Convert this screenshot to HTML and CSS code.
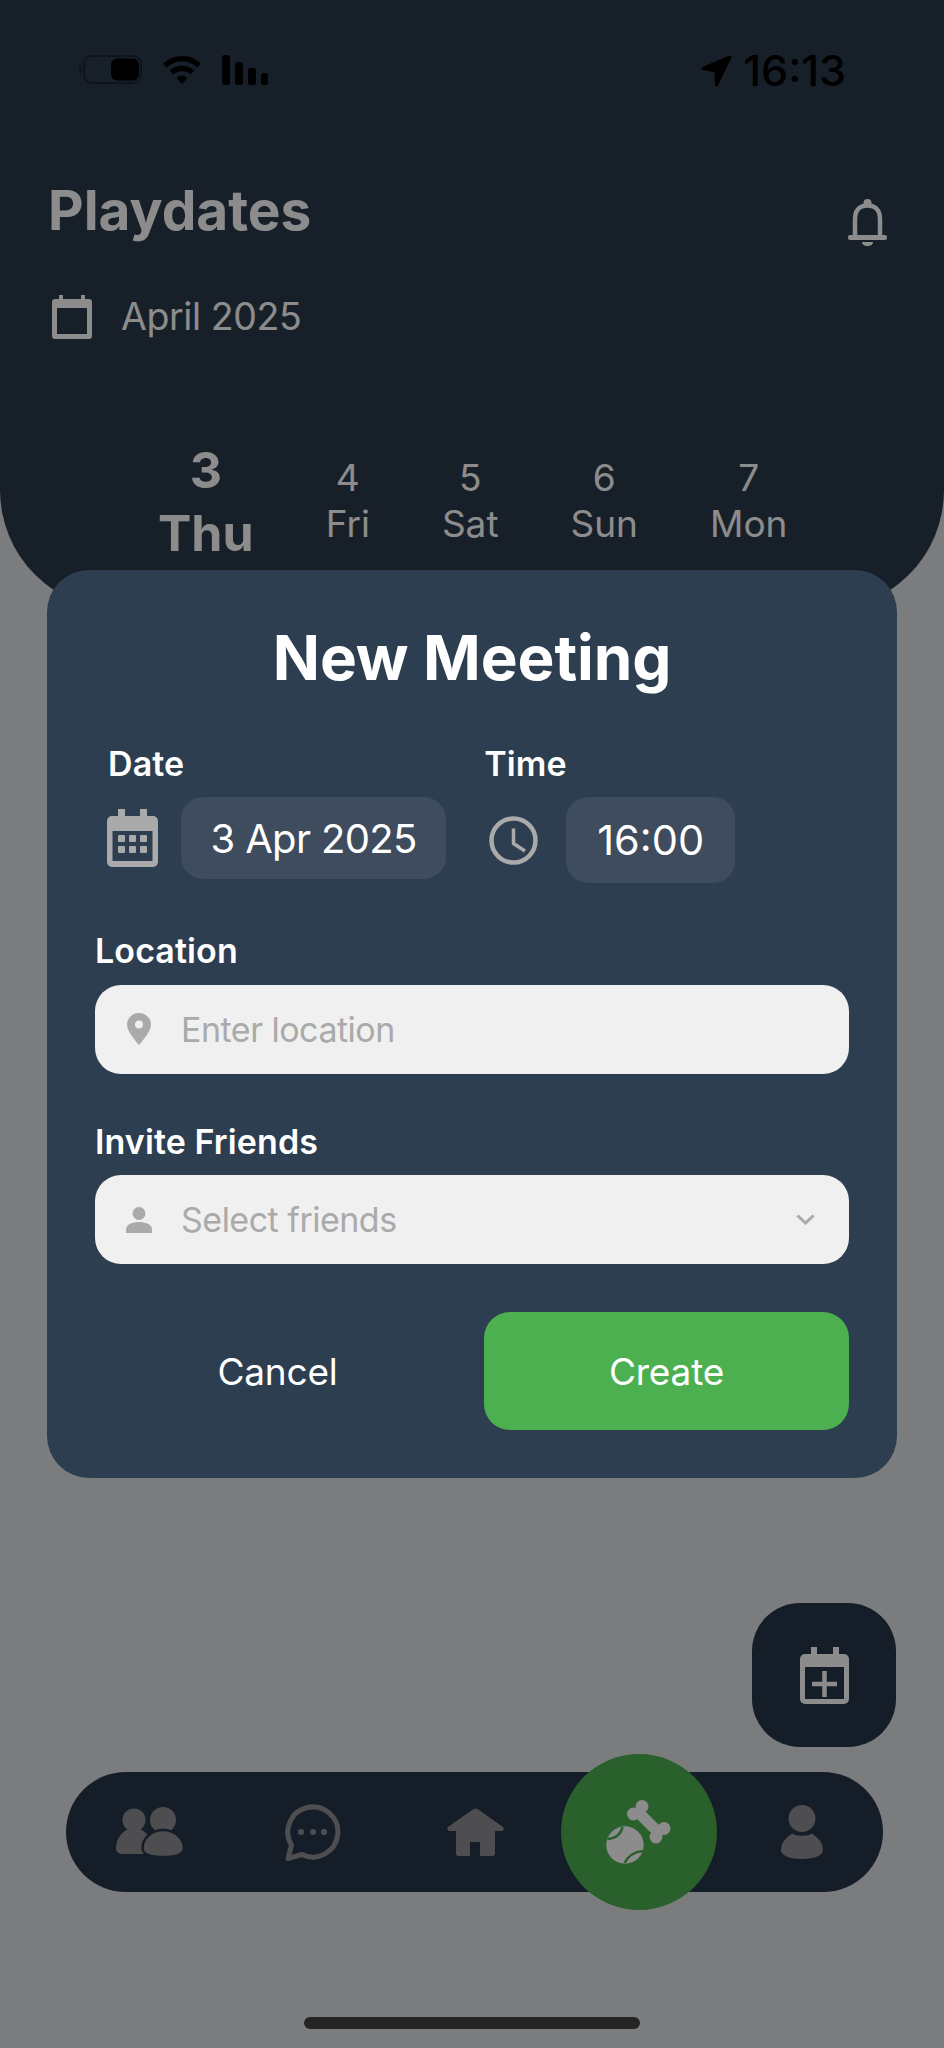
FILE: index.html
```html
<!DOCTYPE html>
<html>
<head>
    <meta charset="utf-8">
    <title>Playdates</title>
    <link rel="stylesheet" href="styles.css">
</head>
<body>
<div class="screen">

    <header class="top">
        <div class="status">
            <div class="status-left">
                <svg class="battery" width="63" height="29" viewBox="0 0 63 29">
                    <rect x="0" y="11" width="2.5" height="7" rx="1" fill="#000" opacity=".35"/>
                    <rect x="5" y="1" width="57" height="27" rx="8" fill="none" stroke="#000" stroke-opacity=".35" stroke-width="2"/>
                    <rect x="32" y="3.5" width="28" height="22" rx="6" fill="#000"/>
                </svg>
                <svg width="40" height="29" viewBox="0 0 40 29">
                    <path d="M3 10.5A25 25 0 0 1 37 10.5M9.5 17.5A16 16 0 0 1 30.5 17.5" fill="none" stroke="#000" stroke-width="5.5"/>
                    <path d="M14.5 23A8 8 0 0 1 25.500 23L20 29Z" fill="#000"/>
                </svg>
                <svg width="46" height="30" viewBox="0 0 46 30" fill="#000">
                    <rect x="0" y="0" width="8" height="30" rx="2.500"/>
                    <rect x="13" y="7" width="8" height="23" rx="2.500"/>
                    <rect x="26" y="13" width="8" height="17" rx="2.500"/>
                    <rect x="39" y="18" width="7" height="12" rx="2.500"/>
                </svg>
            </div>
            <div class="status-right">
                <svg width="31" height="32" viewBox="0 0 31 32">
                    <path d="M29 2L2 13.500L15 16L15.500 30Z" fill="#000" stroke="#000" stroke-width="3" stroke-linejoin="round"/>
                </svg>
                <span class="clock-text">16:13</span>
            </div>
        </div>

        <div class="title-row">
            <h1 class="page-title">Playdates</h1>
            <svg class="bell" width="39" height="47" viewBox="0 0 39 47">
                <circle cx="19.500" cy="4" r="4" fill="#fff"/>
                <path d="M7 37V20C7 11 12 6.500 19.500 6.500S32 11 32 20V37" fill="none" stroke="#fff" stroke-width="4.500"/>
                <rect x="0" y="36" width="39" height="5" rx="2" fill="#fff"/>
                <path d="M14 43H25C25 45.500 22.500 47 19.500 47S14 45.500 14 43Z" fill="#fff"/>
            </svg>
        </div>

        <div class="month-row">
            <svg width="40" height="44" viewBox="0 0 40 44">
                <path fill-rule="evenodd" d="M3 4H7V0H11V4H29V0H33V4H37A3 3 0 0 1 40 7V41A3 3 0 0 1 37 44H3A3 3 0 0 1 0 41V7A3 3 0 0 1 3 4ZM5 13V39H35V13Z" fill="#fff"/>
            </svg>
            <span class="month">April 2025</span>
        </div>

        <div class="days">
            <div class="day day-active"><span>3</span><span>Thu</span></div>
            <div class="day"><span>4</span><span>Fri</span></div>
            <div class="day"><span>5</span><span>Sat</span></div>
            <div class="day"><span>6</span><span>Sun</span></div>
            <div class="day"><span>7</span><span>Mon</span></div>
        </div>
    </header>

    <button class="fab">
        <svg width="49" height="57" viewBox="0 0 49 57">
            <path fill-rule="evenodd" d="M5 7H11V0H17V7H33V0H39V7H44A5 5 0 0 1 49 12V52A5 5 0 0 1 44 57H5A5 5 0 0 1 0 52V12A5 5 0 0 1 5 7ZM5 20V52H44V20Z" fill="#fff"/>
            <path d="M12 37H37M24.500 24V50" stroke="#fff" stroke-width="4.500" fill="none"/>
        </svg>
    </button>

    <nav class="tabbar">
        <div class="tab">
            <svg width="68" height="50" viewBox="0 0 68 50" fill="#8e8e93">
                <circle cx="18" cy="13" r="11.500"/>
                <path d="M0 41C0 31 8 21 18 21S36 30 36 42V47H7C3 47 0 45 0 41Z"/>
                <circle cx="47" cy="13" r="13"/>
                <path d="M26.500 41C26.500 31 36 23 47 23S68 31 68 41C68 47 60 50 47 50S26.500 47 26.500 41Z" stroke="#263649" stroke-width="2.500"/>
            </svg>
        </div>
        <div class="tab">
            <svg width="56" height="57" viewBox="0 0 56 57">
                <path d="M3 54.500L6.500 41A25 25 0 1 1 17 50.500Z" fill="none" stroke="#8e8e93" stroke-width="5" stroke-linejoin="round"/>
                <circle cx="16" cy="28" r="3" fill="#8e8e93"/>
                <circle cx="28" cy="28" r="3" fill="#8e8e93"/>
                <circle cx="39" cy="28" r="3" fill="#8e8e93"/>
            </svg>
        </div>
        <div class="tab">
            <svg width="57" height="48" viewBox="0 0 57 48">
                <path d="M26.500 1L1 19C-.5 20.500 .5 23 2.500 23H9V45.500C9 47 10 48 11.500 48H23V34H33V48H45.500C47 48 48 47 48 45.500V23H54.500C56.500 23 57.500 20.500 56 19L30.500 1C29.500 .3 27.500 .3 26.500 1Z" fill="#8e8e93"/>
            </svg>
        </div>
        <div class="tab">
            <div class="tab-main">
                <svg width="65" height="64" viewBox="0 0 65 64">
                    <circle cx="19" cy="45" r="18.700" fill="#fff"/>
                    <path d="M1.500 39Q14 38 16.500 27M18.500 63Q24 52 37 51" fill="none" stroke="#4caf50" stroke-width="2.500"/>
                    <path d="M31 11L53 33" stroke="#fff" stroke-width="11"/>
                    <g fill="#fff">
                        <circle cx="27.500" cy="14" r="6.500"/>
                        <circle cx="36" cy="6.500" r="6.500"/>
                        <circle cx="50" cy="37" r="6.500"/>
                        <circle cx="58" cy="28.500" r="6.500"/>
                    </g>
                </svg>
            </div>
        </div>
        <div class="tab">
            <svg width="42" height="54" viewBox="0 0 42 54" fill="#8e8e93">
                <circle cx="21" cy="13.500" r="13.500"/>
                <path d="M0 45C0 37 6 32 11 28.500C15 31.500 27 31.500 31 28.500C36 32 42 37 42 45C42 51 32 54 21 54S0 51 0 45Z"/>
            </svg>
        </div>
    </nav>

    <div class="home-bar"></div>

    <div class="overlay"></div>

    <section class="modal">
        <h2 class="modal-title">New Meeting</h2>

        <div class="when">
            <div class="when-field">
                <div class="label when-label">Date</div>
                <div class="when-row">
                    <svg class="when-icon" width="51" height="58" viewBox="0 0 51 58">
                        <path fill-rule="evenodd" d="M5 7H11V0H18V7H33V0H40V7H46A5 5 0 0 1 51 12V53A5 5 0 0 1 46 58H5A5 5 0 0 1 0 53V12A5 5 0 0 1 5 7ZM5.500 22V52H45.500V22Z" fill="#aaa"/>
                        <g fill="#aaa">
                            <rect x="11" y="26" width="7" height="7" rx="1"/>
                            <rect x="22" y="26" width="7" height="7" rx="1"/>
                            <rect x="33" y="26" width="7" height="7" rx="1"/>
                            <rect x="11" y="37" width="7" height="7" rx="1"/>
                            <rect x="22" y="37" width="7" height="7" rx="1"/>
                            <rect x="33" y="37" width="7" height="7" rx="1"/>
                        </g>
                    </svg>
                    <div class="pill pill-date">3 Apr 2025</div>
                </div>
            </div>
            <div class="when-field">
                <div class="label">Time</div>
                <div class="when-row when-row-time">
                    <svg class="when-icon" width="49" height="49" viewBox="0 0 49 49">
                        <circle cx="24.500" cy="24.500" r="22" fill="none" stroke="#aaa" stroke-width="4.500"/>
                        <path d="M24.500 12.500V27.500L36 35" fill="none" stroke="#aaa" stroke-width="3.500"/>
                    </svg>
                    <div class="pill pill-time">16:00</div>
                </div>
            </div>
        </div>

        <div class="label label-block">Location</div>
        <div class="input">
            <span class="input-icon">
                <svg width="24" height="32" viewBox="0 0 24 32">
                    <path fill-rule="evenodd" d="M12 0C18.500 0 24 5 24 11.500C24 18 17 26 12 32C7 26 0 18 0 11.500C0 5 5.500 0 12 0ZM12 7.500A4 4 0 1 0 12 15.500A4 4 0 1 0 12 7.500Z" fill="#aaa"/>
                </svg>
            </span>
            <span class="placeholder">Enter location</span>
        </div>

        <div class="label label-block">Invite Friends</div>
        <div class="input">
            <span class="input-icon">
                <svg width="26" height="26" viewBox="0 0 26 26" fill="#aaa">
                    <circle cx="13" cy="6.500" r="6.500"/>
                    <path d="M0 26V22.500C0 17 7 15 13 15S26 17 26 22.500V26Z"/>
                </svg>
            </span>
            <span class="placeholder">Select friends</span>
            <svg class="chevron" width="19" height="11" viewBox="0 0 19 11">
                <path d="M1.500 1.500L9.500 9L17.500 1.500" fill="none" stroke="#aaa" stroke-width="3"/>
            </svg>
        </div>

        <div class="actions">
            <button class="btn">Cancel</button>
            <button class="btn btn-create">Create</button>
        </div>
    </section>

</div>
</body>
</html>
```

FILE: styles.css
```css
html, body {
    margin: 0;
    padding: 0;
}
body {
    font-family: Inter, "Liberation Sans", sans-serif;
    color: #fff;
}
svg {
    display: block;
    flex: none;
}

.screen {
    position: relative;
    width: 944px;
    height: 2048px;
    overflow: hidden;
    background: #e0e2e5;
}

/* header */
.top {
    height: 610px;
    box-sizing: border-box;
    padding-top: 55px;
    background: #2b3a4c;
    border-radius: 0 0 120px 120px;
}
.status {
    display: flex;
    justify-content: space-between;
    align-items: flex-start;
    height: 32px;
    padding: 0 98px 0 79px;
}
.status-left {
    display: flex;
    align-items: flex-start;
    gap: 20px;
}
.status-right {
    display: flex;
    align-items: center;
    gap: 11px;
}
.clock-text {
    color: #000;
    font-size: 43px;
    font-weight: 500;
    line-height: 32px;
    margin-top: -2px;
}

.title-row {
    display: flex;
    justify-content: space-between;
    align-items: flex-start;
    margin-top: 92px;
    padding: 0 57px 0 48px;
}
.page-title {
    margin: 0;
    font-size: 55px;
    font-weight: 700;
    line-height: 62px;
}
.bell {
    margin-top: 20px;
}

.month-row {
    display: flex;
    align-items: center;
    gap: 29px;
    margin-top: 49px;
    padding-left: 52px;
}
.month {
    font-size: 37.5px;
    letter-spacing: -0.4px;
    line-height: 44px;
}

.days {
    display: flex;
    align-items: center;
    gap: 72px;
    margin-top: 100px;
    padding-left: 158px;
}
.day {
    display: flex;
    flex-direction: column;
    align-items: center;
    margin-bottom: 2px;
    font-size: 37px;
    line-height: 46px;
}
.day-active {
    margin-bottom: 0;
    font-size: 50px;
    font-weight: 700;
    line-height: 63px;
}

/* floating stuff at the bottom */
.fab {
    display: flex;
    align-items: center;
    justify-content: center;
    width: 144px;
    height: 144px;
    margin: 993px 48px 0 auto;
    padding: 0;
    border: 0;
    border-radius: 48px;
    background: #263649;
}

.tabbar {
    display: flex;
    align-items: center;
    box-sizing: border-box;
    width: 817px;
    height: 120px;
    margin: 25px 0 0 66px;
    padding-left: 2px;
    border-radius: 60px;
    background: #263649;
}
.tab {
    flex: 1;
    display: flex;
    justify-content: center;
    align-items: center;
}
.tab-main {
    display: flex;
    align-items: center;
    justify-content: center;
    flex: none;
    width: 156px;
    height: 156px;
    border-radius: 50%;
    background: #4caf50;
}

.home-bar {
    width: 336px;
    height: 12px;
    margin: 125px auto 0;
    border-radius: 6px;
    background: #434343;
}

.overlay {
    position: absolute;
    inset: 0;
    background: rgba(0, 0, 0, 0.45);
}

/* modal */
.modal {
    position: absolute;
    top: 570px;
    left: 47px;
    width: 850px;
    box-sizing: border-box;
    padding: 51px 48px 48px;
    border-radius: 42px;
    background: #2c3e50;
}
.modal-title {
    margin: 0;
    text-align: center;
    font-size: 62px;
    font-weight: 700;
    letter-spacing: -0.1px;
    line-height: 74px;
}

.label {
    font-size: 34px;
    font-weight: 600;
    letter-spacing: 0.1px;
    line-height: 38px;
}
.label-block {
    margin: 49px 0 14.5px;
}
.when-label {
    padding-left: 1px;
}

.when {
    display: flex;
    gap: 38px;
    margin-top: 50px;
    padding-left: 12px;
}
.when-row {
    display: flex;
    align-items: center;
    gap: 23px;
    margin-top: 14px;
}
.when-row-time {
    gap: 28px;
    padding-left: 5px;
}
.pill {
    display: flex;
    align-items: center;
    border-radius: 22px;
    background: #3e4c5e;
}
.pill-date {
    height: 82px;
    padding: 0 29.5px;
    font-size: 40px;
    letter-spacing: -0.65px;
}
.pill-time {
    height: 86px;
    padding: 0 31px;
    font-size: 41.5px;
}

.input {
    display: flex;
    align-items: center;
    height: 89px;
    border-radius: 26px;
    background: #f0f0f0;
}
.input-icon {
    display: flex;
    justify-content: center;
    width: 40px;
    margin: 0 22px 0 24px;
}
.placeholder {
    flex: 1;
    color: #aaa;
    font-size: 34px;
    letter-spacing: -0.5px;
}
.chevron {
    margin-right: 34px;
}

.actions {
    display: flex;
    gap: 24px;
    margin-top: 48px;
}
.btn {
    flex: 1;
    height: 118px;
    padding: 0;
    border: 0;
    border-radius: 26px;
    background: none;
    color: #fff;
    font-family: inherit;
    font-size: 37px;
    letter-spacing: -0.2px;
}
.btn-create {
    background: #4caf50;
}
```
